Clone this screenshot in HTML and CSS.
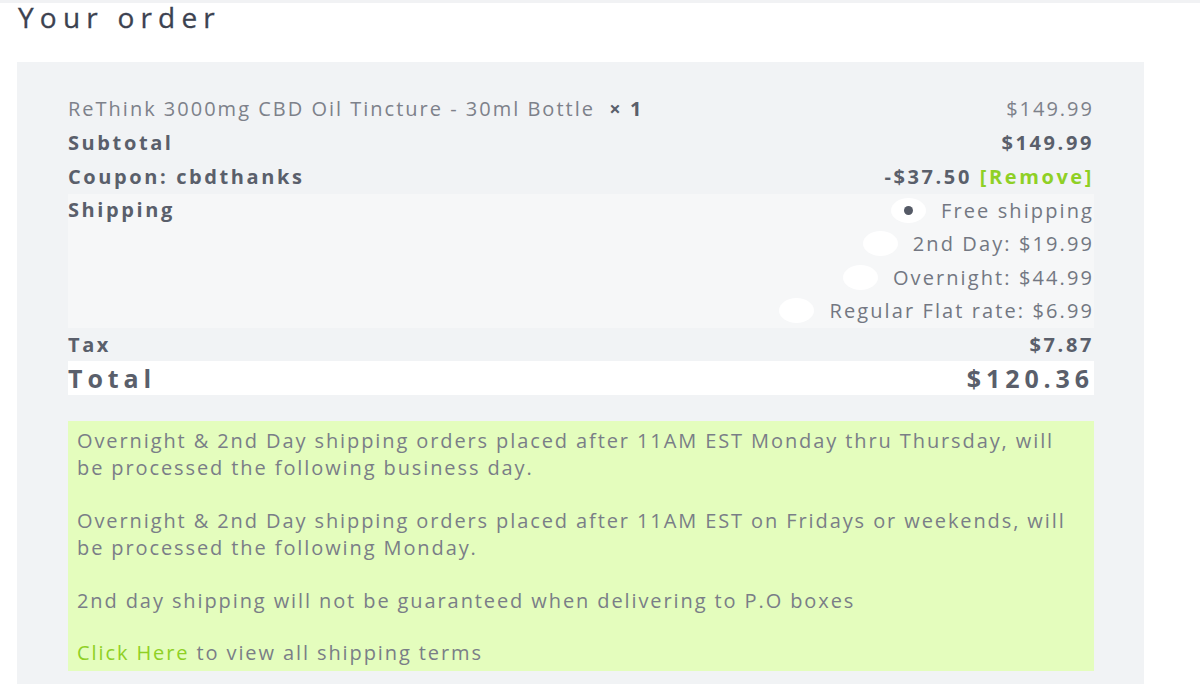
FILE: index.html
```html
<!DOCTYPE html>
<html>
<head>
<meta charset="utf-8">
<link rel="stylesheet" href="styles.css">
</head>
<body>
<div class="topline"></div>
<h3 class="title">Your order</h3>
<div class="panel">
  <div class="row item first">
    <span class="name">ReThink 3000mg CBD Oil Tincture - 30ml Bottle&nbsp; <strong class="qty">× 1</strong></span>
    <span>$149.99</span>
  </div>
  <div class="row bold">
    <span>Subtotal</span>
    <span>$149.99</span>
  </div>
  <div class="row bold">
    <span>Coupon: cbdthanks</span>
    <span>-$37.50 <a class="remove" href="#">[Remove]</a></span>
  </div>
  <div class="shipping">
    <span class="label">Shipping</span>
    <ul class="methods">
      <li><span class="radio checked"></span>Free shipping</li>
      <li><span class="radio"></span>2nd Day: $19.99</li>
      <li><span class="radio"></span>Overnight: $44.99</li>
      <li><span class="radio"></span>Regular Flat rate: $6.99</li>
    </ul>
  </div>
  <div class="row bold tax">
    <span>Tax</span>
    <span>$7.87</span>
  </div>
  <div class="row total">
    <span>Total</span>
    <span>$120.36</span>
  </div>
  <div class="notice">
    <p>Overnight &amp; 2nd Day shipping orders placed after 11AM EST Monday thru Thursday, will be processed the following business day.</p>
    <p>Overnight &amp; 2nd Day shipping orders placed after 11AM EST on Fridays or weekends, will be processed the following Monday.</p>
    <p>2nd day shipping will not be guaranteed when delivering to P.O boxes</p>
    <p class="last"><a href="#" class="link">Click Here</a> to view all shipping terms</p>
  </div>
</div>
</body>
</html>
```
FILE: styles.css
```css
* { box-sizing: border-box; }
html, body { margin: 0; padding: 0; background: #fff; }
body {
  font-family: "Open Sans", "Noto Sans", sans-serif;
  color: #6f737d;
  height: 684px;
  overflow: hidden;
}
.topline {
  height: 3px;
  background: #f1f2f4;
}
.title {
  margin: 0;
  padding: 0 0 0 18px;
  font-size: 28px;
  font-weight: 400;
  line-height: 28px;
  letter-spacing: 6.2px;
  color: #3c4250;
  -webkit-text-stroke: 0.3px #3c4250;
}
.panel {
  margin: 31px 0 0 17px;
  width: 1127px;
  background: #f1f3f5;
  padding: 29px 50px 14px 51px;
}
.row {
  display: flex;
  justify-content: space-between;
  align-items: center;
  height: 34px;
  font-size: 20px;
}
.row.first { height: 34.5px; }
.item { color: #7d818a; letter-spacing: 2px; }
.qty { color: #5a5f6b; font-weight: 700; }
.bold { font-weight: 700; color: #5a5f6b; letter-spacing: 2.6px; }
.remove { color: #8fd025; text-decoration: none; }
.shipping {
  display: flex;
  justify-content: space-between;
  background: #f6f7f8;
  font-size: 20px;
}
.shipping .label {
  font-weight: 700;
  color: #5a5f6b;
  letter-spacing: 2.6px;
  line-height: 32px;
}
.methods {
  list-style: none;
  margin: 0;
  padding: 0;
}
.methods li {
  height: 33.5px;
  display: flex;
  align-items: center;
  justify-content: flex-end;
  color: #737782;
  letter-spacing: 2.1px;
}
.radio {
  width: 35px;
  height: 25px;
  border-radius: 50%;
  background: #fff;
  margin-right: 15px;
  display: flex;
  align-items: center;
  justify-content: center;
  flex-shrink: 0;
}
.radio.checked::after {
  content: "";
  width: 9px;
  height: 9px;
  border-radius: 50%;
  background: #555a66;
}
.tax { height: 33px; }
.total {
  background: #fff;
  font-size: 25px;
  font-weight: 700;
  letter-spacing: 4.9px;
  color: #5a5f6b;
  height: 34px;
}
.notice {
  margin-top: 26.5px;
  background: #e4fdbd;
  padding: 5.5px 9px;
  font-size: 20px;
  line-height: 27px;
  letter-spacing: 1.9px;
  color: #7a7e87;
}
.notice p { margin: 0 0 26px; }
.notice p.last { margin-top: -1px; margin-bottom: 0; }
.link { color: #8fd025; text-decoration: none; }
```
